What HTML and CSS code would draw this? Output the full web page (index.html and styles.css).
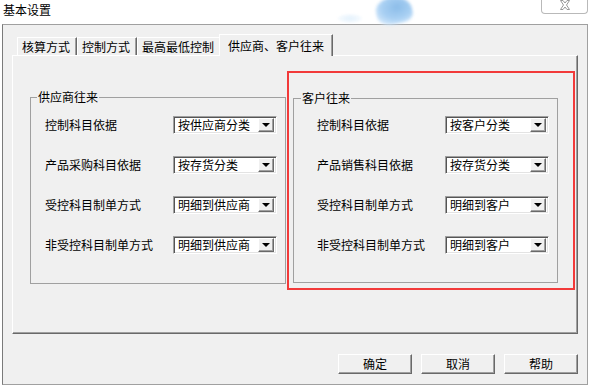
FILE: index.html
```html
<!DOCTYPE html>
<html lang="zh-CN">
<head>
<meta charset="utf-8">
<title>基本设置</title>
<link rel="stylesheet" href="styles.css">
</head>
<body>
<div class="titlebar">
  <span class="title">基本设置</span>
  <div class="glow"></div>
  <div class="glow-faint"></div>
  <div class="close">
    <svg width="12" height="10" viewBox="0 0 12 10"><path d="M1.5 0.5 H4 L6 3 L8 0.5 H10.5 L7.5 5 L10.5 9.5 H8 L6 7 L4 9.5 H1.5 L4.5 5 Z" fill="#fff" stroke="#9a9a9a" stroke-width="1"/></svg>
  </div>
</div>
<div class="window">
  <div class="tabs">
    <div class="tab">核算方式</div>
    <div class="tab">控制方式</div>
    <div class="tab">最高最低控制</div>
    <div class="tab active">供应商、客户往来</div>
  </div>
  <div class="pane">
    <fieldset class="group group-left">
      <legend>供应商往来</legend>
      <div class="rows">
        <div class="row"><span class="label">控制科目依据</span><div class="combo"><span class="value">按供应商分类</span><span class="drop"></span></div></div>
        <div class="row"><span class="label">产品采购科目依据</span><div class="combo"><span class="value">按存货分类</span><span class="drop"></span></div></div>
        <div class="row"><span class="label">受控科目制单方式</span><div class="combo"><span class="value">明细到供应商</span><span class="drop"></span></div></div>
        <div class="row"><span class="label">非受控科目制单方式</span><div class="combo"><span class="value">明细到供应商</span><span class="drop"></span></div></div>
      </div>
    </fieldset>
    <div class="highlight">
      <fieldset class="group group-right">
        <legend>客户往来</legend>
        <div class="rows">
          <div class="row"><span class="label">控制科目依据</span><div class="combo"><span class="value">按客户分类</span><span class="drop"></span></div></div>
          <div class="row"><span class="label">产品销售科目依据</span><div class="combo"><span class="value">按存货分类</span><span class="drop"></span></div></div>
          <div class="row"><span class="label">受控科目制单方式</span><div class="combo"><span class="value">明细到客户</span><span class="drop"></span></div></div>
          <div class="row"><span class="label">非受控科目制单方式</span><div class="combo"><span class="value">明细到客户</span><span class="drop"></span></div></div>
        </div>
      </fieldset>
    </div>
  </div>
  <div class="buttons">
    <button class="btn">确定</button>
    <button class="btn">取消</button>
    <button class="btn">帮助</button>
  </div>
</div>
</body>
</html>
```
FILE: styles.css
```css
* { box-sizing: border-box; }
html, body { margin: 0; padding: 0; }
body {
  width: 590px;
  height: 387px;
  overflow: hidden;
  background: #fff;
  font-family: "Noto Sans CJK SC", "Noto Sans", sans-serif;
  font-size: 12px;
  color: #000;
}
.titlebar {
  height: 24px;
  display: flex;
  align-items: flex-start;
  justify-content: space-between;
  position: relative;
}
.title {
  margin: 3px 0 0 3px;
  line-height: 14px;
}
.glow {
  position: absolute;
  left: 376px;
  top: -3px;
  width: 36px;
  height: 27px;
  border-radius: 45% 55% 30% 40%;
  background: radial-gradient(ellipse at 60% 40%, #8cbde9 0%, #a9d0f3 50%, #d3e8fb 80%, rgba(255,255,255,0) 100%);
  filter: blur(1.5px);
  transform: rotate(-12deg);
}
.glow-faint {
  position: absolute;
  left: 338px;
  top: 14px;
  width: 24px;
  height: 9px;
  border-radius: 50%;
  background: radial-gradient(ellipse, #e3f1fc 0%, rgba(255,255,255,0) 100%);
  filter: blur(1px);
}
.close {
  width: 47px;
  height: 15px;
  margin: -1px 2px 0 0;
  border: 1px solid #b9b9b9;
  border-top: none;
  border-radius: 0 0 4px 4px;
  background: #fff;
  display: flex;
  justify-content: center;
  align-items: flex-start;
  padding-top: 1px;
  position: relative;
}
.window {
  margin-left: 2px;
  width: 586px;
  height: 361px;
  border: 1px solid #a0a0a0;
  border-left-color: #7a7a7a;
  background: #f0f0f0;
  padding: 9px 9px 0 9px;
}
.tabs {
  display: flex;
  align-items: flex-end;
  height: 21px;
  padding-left: 5px;
}
.tab {
  height: 18px;
  padding: 1px 6px 0 4px;
  line-height: 16px;
  border: 1px solid #fff;
  border-right-color: #696969;
  border-bottom: none;
  box-shadow: inset -1px 0 #a0a0a0;
  white-space: nowrap;
}
.tab.active {
  height: 22px;
  margin: 0 -2px -1px -2px;
  padding: 3px 8px 0 8px;
  background: #f0f0f0;
  position: relative;
  z-index: 1;
}
.pane {
  height: 279px;
  border: 1px solid #fff;
  border-right-color: #696969;
  border-bottom-color: #696969;
  box-shadow: inset -1px -1px #a0a0a0;
  display: flex;
  align-items: flex-start;
  padding: 15px 0 0 17px;
}
.group {
  margin: 0;
  border: 1px solid #a0a0a0;
  min-width: 0;
}
.group legend {
  padding: 0 1px;
  line-height: 14px;
}
.group-left {
  width: 256px;
  height: 194px;
  margin-top: 19px;
  padding: 12px 7px 0 14px;
}
.group-left legend { margin-left: -8px; }
.highlight {
  margin-left: 1px;
  width: 288px;
  height: 219px;
  border: 2px solid #f23a3a;
  padding: 18px 0 0 4px;
}
.group-right {
  width: 265px;
  height: 192px;
  padding: 11px 8px 0 23px;
}
.group-right legend { margin-left: -16px; }
.rows {
  display: flex;
  flex-direction: column;
  gap: 22px;
}
.row {
  display: flex;
  align-items: center;
  height: 18px;
}
.label {
  width: 128px;
  line-height: 14px;
  white-space: nowrap;
}
.combo {
  width: 104px;
  height: 18px;
  display: flex;
  align-items: center;
  padding: 2px;
  background: #fff;
  border: 1px solid;
  border-color: #a0a0a0 #fff #fff #a0a0a0;
  box-shadow: inset 1px 1px #555, inset -1px -1px #e3e3e3;
}
.value {
  flex: 1;
  padding-left: 2px;
  line-height: 14px;
  white-space: nowrap;
}
.drop {
  width: 16px;
  height: 14px;
  background: #f0f0f0;
  border: 1px solid;
  border-color: #fff #696969 #696969 #fff;
  box-shadow: inset -1px -1px #a0a0a0;
  display: flex;
  align-items: center;
  justify-content: center;
}
.drop::after {
  content: "";
  width: 0;
  height: 0;
  border-style: solid;
  border-width: 4px 4px 0 4px;
  border-color: #000 transparent transparent transparent;
  margin-right: 1px;
}
.buttons {
  display: flex;
  justify-content: flex-end;
  gap: 9px;
  margin-top: 20px;
}
.btn {
  width: 74px;
  height: 20px;
  padding: 0;
  font-family: inherit;
  font-size: 12px;
  line-height: 16px;
  color: #000;
  background: #f0f0f0;
  border: 1px solid;
  border-color: #fff #696969 #696969 #fff;
  box-shadow: inset -1px -1px #a0a0a0;
}
```
